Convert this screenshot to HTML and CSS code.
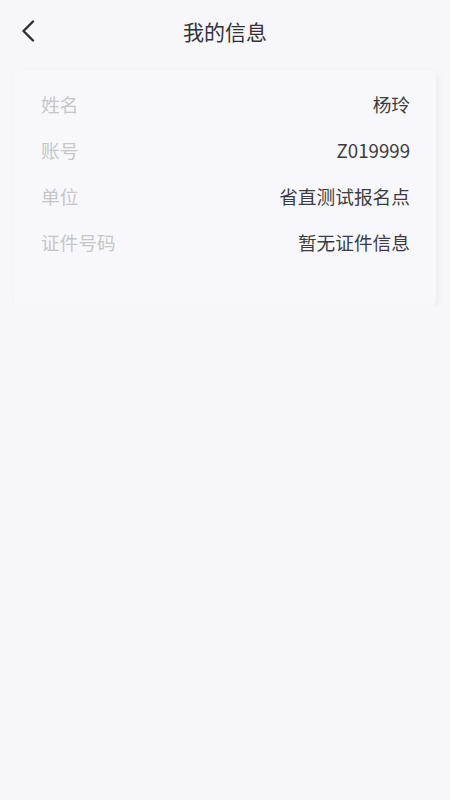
FILE: index.html
```html
<!DOCTYPE html>
<html lang="zh">
<head>
<meta charset="utf-8">
<title>我的信息</title>
<link rel="stylesheet" href="styles.css">
</head>
<body>
<header class="nav">
  <span class="back">
    <svg width="14" height="22" viewBox="0 0 14 22"><path d="M12 1.5 L2.5 11 L12 20.5" fill="none" stroke="#2f2f33" stroke-width="2.4" stroke-linecap="round" stroke-linejoin="round"/></svg>
  </span>
  <h1 class="title">我的信息</h1>
</header>
<section class="card">
  <div class="row"><span class="label">姓名</span><span class="value">杨玲</span></div>
  <div class="row"><span class="label">账号</span><span class="value">Z019999</span></div>
  <div class="row"><span class="label">单位</span><span class="value">省直测试报名点</span></div>
  <div class="row"><span class="label">证件号码</span><span class="value">暂无证件信息</span></div>
</section>
</body>
</html>
```
FILE: styles.css
```css
html, body {
  margin: 0;
  padding: 0;
  background: #f7f7fb;
  font-family: "Noto Sans CJK SC", "Noto Sans", sans-serif;
}
.nav {
  position: relative;
  height: 62px;
  display: flex;
  align-items: center;
  justify-content: center;
}
.back {
  position: absolute;
  left: 21px;
  top: 20px;
  display: flex;
}
.title {
  margin: 0;
  font-size: 21px;
  font-weight: 400;
  color: #333336;
  line-height: 1;
}
.card {
  margin: 8px 14px 0;
  padding: 11px 26px 41px 27px;
  background: #f8f8fc;
  border-radius: 6px;
  box-shadow: 2px 2px 6px rgba(0, 0, 0, 0.05);
}
.row {
  height: 46px;
  display: flex;
  align-items: center;
  justify-content: space-between;
  font-size: 18.7px;
  line-height: 1;
}
.label {
  color: #c6c6c8;
}
.value {
  color: #3c3c3e;
}
```
